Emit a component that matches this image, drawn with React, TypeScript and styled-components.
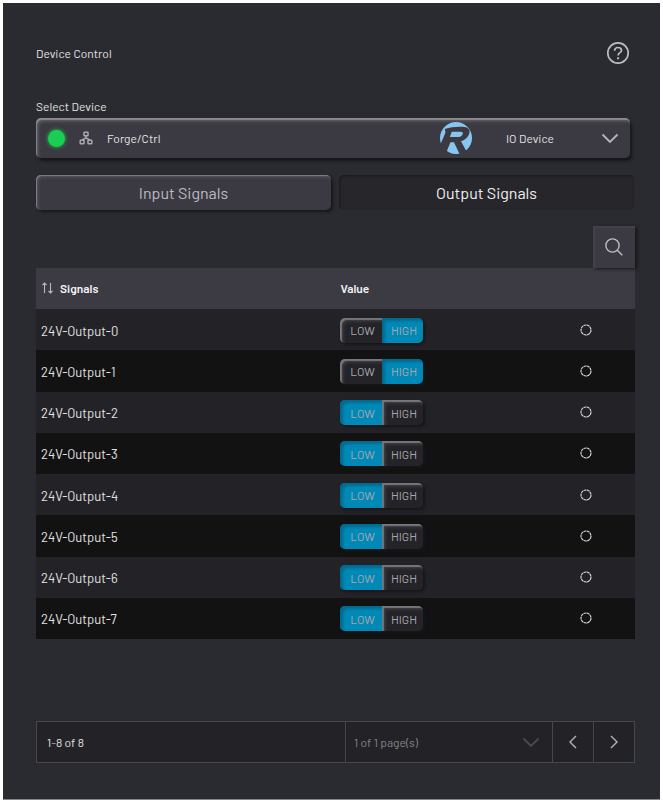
import React, { useState } from "react";
import styled, { createGlobalStyle } from "styled-components";

const GlobalStyle = createGlobalStyle`
  * { box-sizing: border-box; }
  html, body, #root { height: 100%; }
  body {
    margin: 0;
    background: #ffffff;
    color: #e2e2e4;
    font-family: Barlow, Roboto, sans-serif;
    font-size: 12px;
  }
  button, select { font: inherit; color: inherit; }
`;

const Page = styled.div`
  min-height: 100%;
  padding: 3px 3px 2px;
  display: flex;
`;

const Panel = styled.main`
  flex: 1;
  min-width: 0;
  display: flex;
  flex-direction: column;
  padding: 35px 25px 36px 33px;
  background: #2a2b30;
  border-bottom: 1px solid #85858a;
`;

const Header = styled.header`
  display: flex;
  align-items: center;
  justify-content: space-between;
  height: 30px;
  padding-right: 5px;
`;

const Title = styled.h1`
  margin: 0;
  font-size: 12px;
  font-weight: 400;
`;

const PlainButton = styled.button`
  display: flex;
  align-items: center;
  justify-content: center;
  padding: 0;
  border: 0;
  background: none;
  color: #bdbdc0;
  cursor: pointer;
`;

const FieldLabel = styled.label`
  margin-top: 30px;
  line-height: 16px;
  height: 20px;
`;

const DevicePicker = styled.div`
  display: grid;
  grid-template-columns: 43px 29px 1fr 67px 95px 29px;
  align-items: center;
  height: 40px;
  margin-right: 5px;
  border-radius: 5px;
  background: #3b3942;
  box-shadow:
    inset 1px 2px 1px #8b8a8f,
    inset 3px 4px 3px #55545b,
    2px 3px 3px #17171a;

  > * { grid-row: 1; }
`;

const DeviceSelect = styled.select`
  grid-column: 1 / -1;
  width: 100%;
  height: 40px;
  padding: 0 0 0 71px;
  border: 0;
  background: transparent;
  appearance: none;
  cursor: pointer;

  option { background: #3b3942; }
`;

const PickerItem = styled.span<{ $column: number }>`
  grid-column: ${(p) => p.$column};
  display: flex;
  align-items: center;
  pointer-events: none;
`;

const StatusDot = styled.span`
  width: 17px;
  height: 17px;
  margin-left: 12px;
  border-radius: 50%;
  background: #19ce52;
  box-shadow: 0 0 4px #19ce52;
`;

const Tabs = styled.div`
  display: grid;
  grid-template-columns: 1fr 1fr;
  gap: 8px;
  margin: 17px 1px 0 0;
`;

const Tab = styled.button<{ $active: boolean }>`
  height: 35px;
  padding: 0;
  border: 0;
  border-radius: 5px;
  font-size: 16px;
  line-height: 34px;
  cursor: pointer;
  color: ${(p) => (p.$active ? "#f0f0f0" : "#bcbcc2")};
  background: ${(p) => (p.$active ? "#26262b" : "#3b3942")};
  box-shadow: ${(p) =>
    p.$active
      ? "inset 1px 1px 2px #19191c"
      : "inset 1px 1px 1px #818087, inset 3px 3px 3px #4b4a52, 2px 2px 3px #17171a"};
`;

const SearchButton = styled(PlainButton)`
  align-self: flex-end;
  position: relative;
  width: 42px;
  height: 42px;
  margin-top: 16px;
  background: #3b3942;
  box-shadow: inset 2px 2px 3px #45434c, 2px 1px 3px #17171a;
`;

const SignalTable = styled.table`
  width: 100%;
  height: 371px;
  border-collapse: collapse;
  table-layout: fixed;
`;

const HeadCell = styled.th`
  height: 41px;
  padding: 0 5px 2px;
  background: #3c3a43;
  color: #f4f4f4;
  font-size: 12px;
  font-weight: 600;
  text-align: left;
`;

const SortButton = styled(PlainButton)`
  gap: 6px;
  color: #f4f4f4;
  font-weight: 600;
`;

const SignalRow = styled.tr`
  background: #232227;
  &:nth-child(even) { background: #121212; }
`;

const Cell = styled.td`
  height: 41px;
  padding: 2px 4px 0 5px;
  font-size: 13px;
`;

const ValueCell = styled(Cell)`
  padding: 1px 4px 0;
`;

const StateCell = styled(Cell)`
  padding: 0 0 0 47px;
  svg { display: block; }
`;

const Toggle = styled.div`
  display: flex;
  width: 83px;
  border-radius: 5px;
  box-shadow: 2px 2px 3px #17171a;
`;

const ToggleOption = styled.button<{ $on: boolean }>`
  width: 42px;
  height: 25px;
  padding: 0 0 0 4px;
  border: 0;
  font-size: 12px;
  line-height: 24px;
  cursor: pointer;
  color: #a7a7ab;
  background: ${(p) => (p.$on ? "#0089b7" : "#242328")};
  box-shadow: ${(p) =>
    p.$on
      ? "inset 3px 3px 3px #00698d"
      : "inset 2px 2px 1px #77767a, inset 4px 4px 3px #38373c"};

  &:first-child { border-radius: 5px 0 0 5px; }
  &:last-child { border-radius: 0 5px 5px 0; width: 41px; }
`;

const Pagination = styled.footer`
  display: grid;
  grid-template-columns: 308fr 207fr 41px 41px;
  height: 42px;
  margin-top: auto;
  border: 1px solid #47464b;
  background: #232227;

  > * + * { border-left: 1px solid #47464b; }
`;

const RangeText = styled.span`
  display: flex;
  align-items: center;
  padding-left: 10px;
`;

const PageChooser = styled.div`
  display: grid;
  grid-template-columns: 1fr 30px;
  align-items: center;
  > * { grid-row: 1; }
  > svg { grid-column: 2; pointer-events: none; }
`;

const PageSelect = styled.select`
  grid-column: 1 / -1;
  height: 40px;
  padding: 0 30px 0 8px;
  border: 0;
  appearance: none;
  background: transparent;

  &:disabled { color: #85858a; opacity: 1; }
`;

const HelpIcon = () => (
  <svg width="24" height="24" viewBox="0 0 24 24" fill="none" stroke="currentColor" strokeWidth="1.7" aria-hidden="true">
    <circle cx="12" cy="12" r="10.2" />
    <path d="M8.6 9.8V9.3A3.3 3.3 0 0 1 12 6.5C14 6.5 15.5 7.7 15.5 9.4C15.5 11.8 12.1 11.5 12.1 14.4" />
    <path d="M11.1 17.3h2" strokeWidth="2" />
  </svg>
);

const NetworkIcon = () => (
  <svg width="14" height="14" viewBox="0 0 14 14" fill="none" stroke="#aaa9ae" strokeWidth="1.5" aria-hidden="true">
    <rect x="5" y="1.2" width="4" height="3.6" rx=".6" />
    <rect x="1.2" y="9.2" width="3.8" height="3.6" rx=".6" />
    <rect x="9" y="9.2" width="3.8" height="3.6" rx=".6" />
    <path d="M7 4.8v2L3.2 9M7 6.8L10.8 9" />
  </svg>
);

const BrandLogo = () => (
  <svg width="34" height="34" viewBox="0 0 34 34" aria-hidden="true">
    <circle cx="17" cy="17" r="16" fill="#87c6ef" />
    <path
      d="M5.8 7.9C12 6 20 5.2 25.5 6C30.3 6.7 31.7 9.7 29.7 13.9C28.3 17 25.7 19 22 20.2L27.8 31L21 34L15 21.2H11.5L7 32L0 27L2.5 21L6.5 11.5Z"
      fill="#3b3942"
    />
    <path d="M12.8 10.8H21.5C23.8 10.8 24.4 11.7 23.5 13.5C22.5 15.4 21 16 18.2 16H10.8Z" fill="#87c6ef" />
  </svg>
);

type ChevronProps = { direction: "down" | "left" | "right"; color?: string };

const chevronPaths = {
  down: "M1.5 5.5L9 13L16.5 5.5",
  left: "M12 3L6 9L12 15",
  right: "M6 3L12 9L6 15",
};

const Chevron = ({ direction, color = "#b5b5b9" }: ChevronProps) => (
  <svg width="18" height="18" viewBox="0 0 18 18" fill="none" stroke={color} strokeWidth={direction === "down" ? 1.8 : 1.4} aria-hidden="true">
    <path d={chevronPaths[direction]} />
  </svg>
);

const SearchIcon = () => (
  <svg width="20" height="20" viewBox="0 0 20 20" fill="none" stroke="currentColor" strokeWidth="1.4" aria-hidden="true">
    <circle cx="8.5" cy="8.5" r="6.6" />
    <path d="M13.3 13.3L18.3 18.3" />
  </svg>
);

const SortIcon = () => (
  <svg width="13" height="12" viewBox="0 0 13 12" fill="none" stroke="#b8b8bc" strokeWidth="1.1" aria-hidden="true">
    <path d="M3.5 11V1M1.5 3L3.5 1L5.5 3M9.5 1V11M7.5 9L9.5 11L11.5 9" />
  </svg>
);

const StateIcon = () => (
  <svg width="12" height="12" viewBox="0 0 12 12" fill="none" role="img" aria-label="Signal state">
    <circle cx="6" cy="6" r="5" stroke="#dededf" strokeWidth="1.1" strokeDasharray="3 .4" />
  </svg>
);

const levels = ["LOW", "HIGH"] as const;
type Level = (typeof levels)[number];

const initialSignals: Level[] = ["HIGH", "HIGH", "LOW", "LOW", "LOW", "LOW", "LOW", "LOW"];
const tabNames = ["Input Signals", "Output Signals"];

export default function App() {
  const [signals, setSignals] = useState<Level[]>(initialSignals);
  const [tab, setTab] = useState("Output Signals");

  const setLevel = (index: number, level: Level) =>
    setSignals((current) => current.map((value, i) => (i === index ? level : value)));

  return (
    <>
      <GlobalStyle />
      <Page>
        <Panel>
          <Header>
            <Title>Device Control</Title>
            <PlainButton type="button" aria-label="Help">
              <HelpIcon />
            </PlainButton>
          </Header>

          <FieldLabel htmlFor="device">Select Device</FieldLabel>
          <DevicePicker>
            <DeviceSelect id="device">
              <option>Forge/Ctrl</option>
            </DeviceSelect>
            <PickerItem $column={1}><StatusDot /></PickerItem>
            <PickerItem $column={2}><NetworkIcon /></PickerItem>
            <PickerItem $column={4}><BrandLogo /></PickerItem>
            <PickerItem $column={5}>IO Device</PickerItem>
            <PickerItem $column={6}><Chevron direction="down" /></PickerItem>
          </DevicePicker>

          <Tabs role="tablist">
            {tabNames.map((name) => (
              <Tab key={name} type="button" role="tab" aria-selected={tab === name} $active={tab === name} onClick={() => setTab(name)}>
                {name}
              </Tab>
            ))}
          </Tabs>

          <SearchButton type="button" aria-label="Search signals">
            <SearchIcon />
          </SearchButton>

          <SignalTable>
            <colgroup>
              <col width="50%" />
              <col width="33%" />
              <col />
            </colgroup>
            <thead>
              <tr>
                <HeadCell scope="col">
                  <SortButton type="button">
                    <SortIcon />
                    Signals
                  </SortButton>
                </HeadCell>
                <HeadCell scope="col">Value</HeadCell>
                <HeadCell aria-label="State" />
              </tr>
            </thead>
            <tbody>
              {signals.map((value, index) => (
                <SignalRow key={index}>
                  <Cell>24V-Output-{index}</Cell>
                  <ValueCell>
                    <Toggle role="group" aria-label={`24V-Output-${index}`}>
                      {levels.map((level) => (
                        <ToggleOption key={level} type="button" aria-pressed={value === level} $on={value === level} onClick={() => setLevel(index, level)}>
                          {level}
                        </ToggleOption>
                      ))}
                    </Toggle>
                  </ValueCell>
                  <StateCell><StateIcon /></StateCell>
                </SignalRow>
              ))}
            </tbody>
          </SignalTable>

          <Pagination>
            <RangeText>1-8 of 8</RangeText>
            <PageChooser>
              <PageSelect aria-label="Page" disabled>
                <option>1 of 1 page(s)</option>
              </PageSelect>
              <Chevron direction="down" color="#4b4a4f" />
            </PageChooser>
            <PlainButton type="button" aria-label="Previous page"><Chevron direction="left" /></PlainButton>
            <PlainButton type="button" aria-label="Next page"><Chevron direction="right" /></PlainButton>
          </Pagination>
        </Panel>
      </Page>
    </>
  );
}
